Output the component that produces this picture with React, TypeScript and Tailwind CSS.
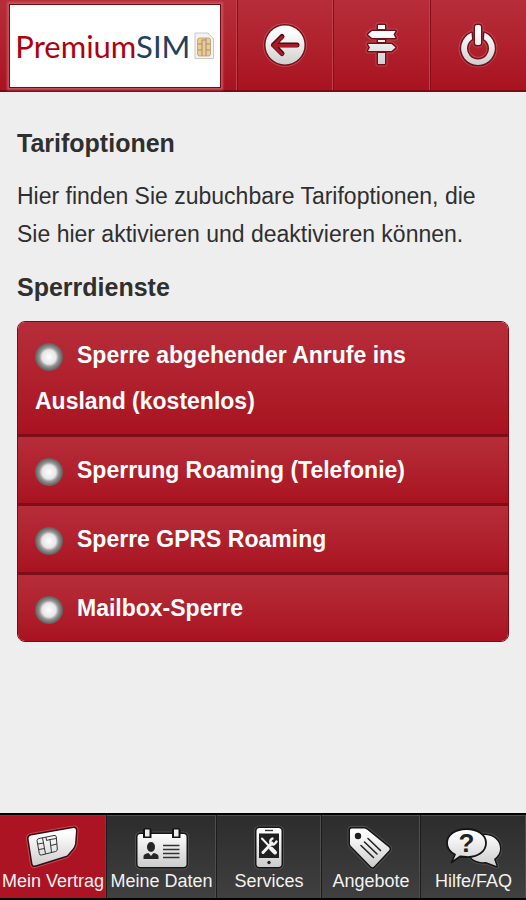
import React, { useState } from "react";

type IconProps = { id: string; size: string; box: string; dark: string; rim: string; shape: React.ReactNode; children?: React.ReactNode };

// Light icon body with a dark outline and a soft rim around it
function EmbossedIcon({ id, size, box, dark, rim, shape, children }: IconProps) {
  return (
    <svg className={size} viewBox={box} aria-hidden="true">
      <defs>
        <linearGradient id={id} x1="0" y1="0" x2="0" y2="48" gradientUnits="userSpaceOnUse">
          <stop offset="0.2" stopColor="#ffffff" />
          <stop offset="1" stopColor="#c6c6c6" />
        </linearGradient>
      </defs>
      <g fill={rim} stroke={rim} strokeWidth="5" strokeLinejoin="round" opacity="0.7">{shape}</g>
      <g fill={dark} stroke={dark} strokeWidth="3" strokeLinejoin="round">{shape}</g>
      <g fill={`url(#${id})`}>{shape}</g>
      {children}
    </svg>
  );
}

const headerIcon = { size: "h-12 w-12", box: "0 0 48 48", dark: "#74101a", rim: "#c95862" };
const navIcon = { size: "h-12 w-14", box: "0 0 56 48", dark: "#151515", rim: "#5c5c5c" };

function BackIcon() {
  return (
    <EmbossedIcon {...headerIcon} id="back" shape={<circle cx="24" cy="23" r="19.5" />}>
      <path d="M36 23H12.500M21 14.500L12.500 23L21 31.500" fill="none" stroke="#4d0810" strokeWidth="5" strokeLinecap="round" strokeLinejoin="round" />
      <path d="M36 23.500H12.500M21 15L12.500 23.500L21 32" fill="none" stroke="#a51c28" strokeWidth="3" strokeLinecap="round" strokeLinejoin="round" />
    </EmbossedIcon>
  );
}

function SignpostIcon() {
  return (
    <EmbossedIcon
      {...headerIcon}
      id="signpost"
      shape={
        <>
          <path d="M20 3H27V7H20ZM20 18H27V20H20ZM20 31H27V42H20Z" />
          <path d="M10 12.500L14 9H37.500L35.500 12.500L37.500 16H14Z" />
          <path d="M10 22H33.500L37.500 25.500L33.500 29H10L12 25.500Z" />
        </>
      }
    />
  );
}

function PowerIcon() {
  return (
    <EmbossedIcon
      {...headerIcon}
      id="power"
      shape={
        <>
          <path d="M17.500 10.800A16.800 16.800 0 1 0 30.500 10.800L30 17.300A11 11 0 1 1 18 17.300Z" />
          <rect x="21" y="3" width="6" height="20" rx="2" />
        </>
      }
    />
  );
}

function SimIcon() {
  return (
    <EmbossedIcon {...navIcon} id="sim" dark="#3d0a0e" rim="#cf6068" shape={<path d="M6 12.500L48.500 5Q51 4.500 51 7.500L50 21Q49.500 23.500 47.500 26L42 32.500L10 42.500Q8 43 7.500 41L3.500 15.500Q3.500 13 6 12.500Z" />}>
      <g fill="none" stroke="#333" strokeWidth="1">
        <path d="M14 15.500L29 12.500Q31 12 31.300 14L32.300 26Q32.500 28 30.500 28.500L16.500 32Q14.500 32.500 14.300 30.500L12 17.500Q12 16 14 15.500Z" />
        <path d="M13 21L18.500 20L20.500 31M14 26.500L19.500 25.500M17.500 15L18.500 20M21 14L21.500 17.500L25 16.500L26.500 29.500M25 16.500L31.500 15.500M25.700 22.500L32 21" />
      </g>
    </EmbossedIcon>
  );
}

function CardIcon() {
  return (
    <EmbossedIcon
      {...navIcon}
      id="card"
      shape={<rect x="3.500" y="11" width="49" height="33" rx="3" />}
    >
      <path d="M9 15V7.500Q9 5 11 5H15.500Q17.500 5 17.500 7.500V15ZM38 15V7.500Q38 5 40 5H44.500Q46.500 5 46.500 7.500V15Z" fill="#151515" />
      <rect x="11" y="6.500" width="4.500" height="7" fill="#eee" />
      <rect x="40" y="6.500" width="4.500" height="7" fill="#eee" />
      <g fill="#262626">
        <ellipse cx="17" cy="24" rx="4" ry="5" />
        <path d="M9.500 36V33Q10 31 14.500 30L17 33L19.500 30Q24 31 24.500 33V36Z" />
      </g>
      <path d="M29 22.500H45.500M29 26.500H45.500M29 30.500H45.500M29 34.500H45.500" stroke="#333" strokeWidth="1.400" />
    </EmbossedIcon>
  );
}

function PhoneIcon() {
  return (
    <EmbossedIcon {...navIcon} id="phone" shape={<rect x="15.500" y="5" width="25" height="39" rx="3" />}>
      <rect x="18" y="10.500" width="20" height="24.500" fill="#202020" />
      <path d="M24 7.500H32" stroke="#333" strokeWidth="1.400" />
      <circle cx="28" cy="39.500" r="1.700" fill="#222" />
      <g fill="none" stroke="#f4f4f4" strokeLinecap="round">
        <path d="M22 29.500L31 20" strokeWidth="3" />
        <path d="M31.500 15.500Q28 17.500 30 20.500Q33 23 35.500 18.500" strokeWidth="2.500" />
        <path d="M21 15.500L28 23" strokeWidth="2" />
        <path d="M30 25.500L34 29.500" strokeWidth="4" />
      </g>
    </EmbossedIcon>
  );
}

function TagIcon() {
  return (
    <EmbossedIcon {...navIcon} id="tag" shape={<path d="M8.500 5.500H21.500Q23 5.500 24.500 7L46 24.500Q47.500 26 46 27.500L31 43.500Q29.500 45 28 43.500L8 23Q7 22 7 20.500V7Q7 5.500 8.500 5.500Z" />}>
      <circle cx="15" cy="13" r="3.200" fill="#202020" />
      <path d="M25 15.500L37.500 27.500M21.500 19L34 31M18 22.500L30.500 34.500" stroke="#222" strokeWidth="1.600" strokeLinecap="round" />
    </EmbossedIcon>
  );
}

function HelpIcon() {
  return (
    <EmbossedIcon {...navIcon} id="help" shape={<path d="M38 12C48 12 54 18 54 25.500C54 30 51.500 33.500 48 36L50.500 43L40 39C31 40 22 36 22 26C22 18 29 12 38 12Z" />}>
      <path d="M20.500 6C31 6 40 11.500 40 20C40 29 31 34.500 20.500 34Q17 34 14 33.500L5.500 39.500L9 31.500C4 29 1 24.500 1 20C1 11.500 10 6 20.500 6Z" fill="url(#help)" stroke="#151515" strokeWidth="1.800" strokeLinejoin="round" />
      <text x="20.500" y="29" textAnchor="middle" fontSize="26" fontWeight="700" fill="#222">?</text>
    </EmbossedIcon>
  );
}

function Logo() {
  return (
    <a
      href="#start"
      className="flex w-full items-center justify-center gap-1 border border-[#6d0d16] bg-white shadow-[0_0_2px_2px_#c9535d]"
    >
      <span className="font-[Lato,sans-serif] text-[31px] text-[#b0000e]">
        Premium<span className="text-[#24405c]">SIM</span>
      </span>
      <svg className="h-7 w-5 shrink-0" viewBox="0 0 20 28" aria-hidden="true">
        <path d="M1 1H14L19.500 7V26.500H1Z" fill="#f3f3f3" stroke="#c9c9c9" />
        <rect x="3.500" y="6" width="13" height="18" rx="2" fill="#e8cf85" stroke="#b99a72" strokeWidth="0.800" />
        <path d="M3.500 12H8V18H3.500M16.500 12H12V18H16.500M8 12L8 8H12M8 18V24M12 18V24M12 12V6" fill="none" stroke="#b0848c" />
      </svg>
    </a>
  );
}

const headerActions = [
  { label: "Zurück", icon: <BackIcon /> },
  { label: "Navigation", icon: <SignpostIcon /> },
  { label: "Abmelden", icon: <PowerIcon /> },
];

const services = [
  { id: "ausland", label: "Sperre abgehender Anrufe ins Ausland (kostenlos)" },
  { id: "telefonie", label: "Sperrung Roaming (Telefonie)" },
  { id: "gprs", label: "Sperre GPRS Roaming" },
  { id: "mailbox", label: "Mailbox-Sperre" },
];

const navItems = [
  { label: "Mein Vertrag", icon: <SimIcon />, active: true },
  { label: "Meine Daten", icon: <CardIcon /> },
  { label: "Services", icon: <PhoneIcon /> },
  { label: "Angebote", icon: <TagIcon /> },
  { label: "Hilfe/FAQ", icon: <HelpIcon /> },
];

export default function App() {
  const [selected, setSelected] = useState<string[]>([]);

  const toggle = (id: string) =>
    setSelected((prev) => (prev.includes(id) ? prev.filter((s) => s !== id) : [...prev, id]));

  return (
    <div className="flex min-h-screen flex-col bg-[#eeeeee] font-['Liberation_Sans',sans-serif] text-[#2f2f2f]">
      {/* Header */}
      <header className="flex h-[92px] border-b-2 border-[#7c0a14] bg-linear-to-b from-[#b62d39] to-[#a91220]">
        <div className="flex w-[45%] pt-1 pr-4 pb-[2px] pl-[9px]">
          <Logo />
        </div>
        {headerActions.map((action) => (
          <button
            key={action.label}
            aria-label={action.label}
            className="flex flex-1 items-center justify-center border-l border-[#850f19] pt-[2px] shadow-[-1px_0_0_#bd424c]"
          >
            {action.icon}
          </button>
        ))}
      </header>

      {/* Content */}
      <main className="flex flex-1 flex-col gap-4 px-[17px] pt-[33px] pb-8">
        <h1 className="text-[25px] leading-9 font-bold">Tarifoptionen</h1>
        <p className="text-[23px] leading-[38px]">
          Hier finden Sie zubuchbare Tarifoptionen, die Sie hier aktivieren und deaktivieren können.
        </p>
        <h2 className="text-[25px] leading-9 font-bold">Sperrdienste</h2>

        <ul className="divide-y-3 divide-[#7f0d17] overflow-hidden rounded-lg border border-[#7c0a14]">
          {services.map((service) => (
            <li key={service.id} className="bg-linear-to-b from-[#b62d39] to-[#a91220]">
              <label
                htmlFor={service.id}
                className="block px-[17px] py-[10px] text-[23px] leading-[46px] font-bold text-white"
              >
                <input
                  id={service.id}
                  type="checkbox"
                  checked={selected.includes(service.id)}
                  onChange={() => toggle(service.id)}
                  className="mr-[14px] h-7 w-7 appearance-none rounded-full bg-[radial-gradient(circle_closest-side,#ffffff_0%,#e6e6e6_50%,#999999_68%,#777777_85%,#6a5a5a_100%)] align-middle checked:bg-[radial-gradient(circle_closest-side,#b9f28a_0%,#62b52c_50%,#999999_68%,#5e5e5e_100%)]"
                />
                {service.label}
              </label>
            </li>
          ))}
        </ul>
      </main>

      {/* Bottom navigation */}
      <nav className="grid grid-cols-[107fr_110fr_105fr_99fr_105fr] border-y-2 border-black bg-linear-to-b from-[#2c2c2c] to-[#404040]">
        {navItems.map((item) => (
          <a
            key={item.label}
            href="#"
            className={`flex flex-col items-center border-r border-[#1c1c1c] pt-2 pb-[7px] text-lg leading-5 whitespace-nowrap text-[#f2f2f2] shadow-[inset_-1px_1px_0_#4e4e4e] last:border-r-0 ${
              item.active ? "bg-[#ac1423]" : ""
            }`}
          >
            {item.icon}
            <span>{item.label}</span>
          </a>
        ))}
      </nav>
    </div>
  );
}
